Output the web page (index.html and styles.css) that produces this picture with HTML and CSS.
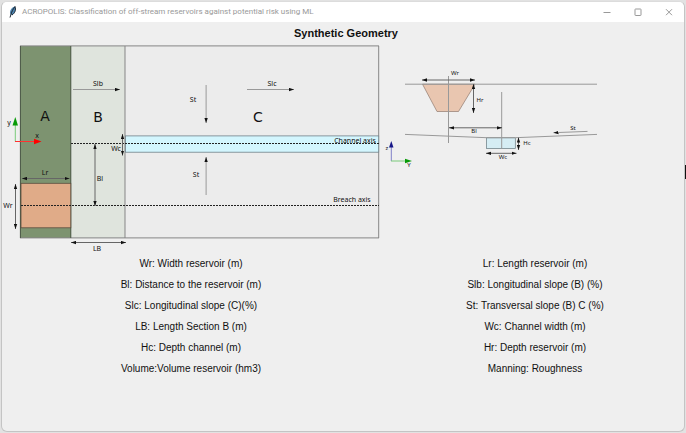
FILE: index.html
```html
<!DOCTYPE html>
<html lang="en">
<head>
<meta charset="utf-8">
<title>ACROPOLIS</title>
<link rel="stylesheet" href="styles.css">
</head>
<body>
<main class="window">
  <header class="titlebar">
    <svg class="app-icon" viewBox="0 0 10 12" aria-hidden="true">
      <path d="M7 0.500C4 1.200 2 3.500 2 6.500L2.500 8.500L4 9C7 7 8.200 4 7 0.500Z" fill="#4c82ad"/>
      <path d="M7 0.500C5 3 3.500 6 2.800 9L2 11.500M7 0.500C8.200 4 7 7 4 9" fill="none" stroke="#1c2530" stroke-width="1"/>
    </svg>
    <span class="app-name">ACROPOLIS: Classification of off-stream reservoirs against potential risk using ML</span>
    <div class="controls">
      <button type="button" aria-label="Minimize"><svg viewBox="0 0 8 8"><path d="M0.500 4.500H7.500"/></svg></button>
      <button type="button" aria-label="Maximize"><svg viewBox="0 0 8 8"><rect x="1" y="1" width="6" height="6.500" rx="0.500"/></svg></button>
      <button type="button" aria-label="Close"><svg viewBox="0 0 8 8"><path d="M1 1.200L7 7.200M7 1.200L1 7.200"/></svg></button>
    </div>
  </header>

  <h1 class="heading">Synthetic Geometry</h1>

  <section class="columns">
    <svg class="figure" viewBox="2 43 378 209" role="img" aria-label="Plan view">
      <defs>
        <marker id="tip" viewBox="0 0 6 4" refX="6" refY="2" markerWidth="5" markerHeight="4" markerUnits="userSpaceOnUse" orient="auto-start-reverse"><path d="M0 0L6 2L0 4Z" fill="#111"/></marker>
      </defs>
      <rect x="125" y="46" width="254" height="192" fill="#ececec"/>
      <rect x="71" y="46" width="54" height="192" fill="#dfe4dd"/>
      <rect x="20" y="46" width="51" height="192" fill="#7d9370"/>
      <g class="edge">
        <path d="M20 45.900H379M20 237.900H379M378.700 46V238M125 46V238"/>
        <path d="M20.400 46V238M70.800 46V238" stroke="#4c5747"/>
      </g>
      <rect x="125.400" y="135.900" width="253.300" height="16.300" fill="#d3f6fe" stroke="#708087" stroke-width="0.800"/>
      <rect x="21" y="183.300" width="49.800" height="44.500" fill="#e0ab88" stroke="#5b4e3f" stroke-width="0.800"/>
      <path class="axis" d="M71 143.500H379M21 205.500H379"/>
      <g class="arrow">
        <path d="M73 89.500H120" marker-end="url(#tip)"/>
        <path d="M247 89.500H294" marker-end="url(#tip)"/>
        <path d="M206.100 85V123" marker-end="url(#tip)"/>
        <path d="M206.100 195V157" marker-end="url(#tip)"/>
      </g>
      <g class="arrow dark">
        <path d="M22 178.500H69.500" marker-start="url(#tip)" marker-end="url(#tip)"/>
        <path d="M71 242.500H126" marker-start="url(#tip)" marker-end="url(#tip)"/>
        <path d="M15.500 184V229" marker-start="url(#tip)" marker-end="url(#tip)"/>
        <path d="M95 144V206" marker-start="url(#tip)" marker-end="url(#tip)"/>
        <path d="M122.500 134V155.500" marker-start="url(#tip)" marker-end="url(#tip)"/>
      </g>
      <path d="M15.300 141.500V123" stroke="#7acb7a"/>
      <path d="M12.500 125.500L15.300 117L18 125.500Z" fill="#079a07"/>
      <path d="M15 141.500H36" stroke="#ff3030"/>
      <path d="M34 138.800L41.500 141.500L34 144.200Z" fill="#f00"/>
      <g class="label">
        <text x="98" y="86">Slb</text>
        <text x="272" y="86">Slc</text>
        <text x="193" y="102">St</text>
        <text x="196" y="177">St</text>
        <text x="45" y="175">Lr</text>
        <text x="8" y="208">Wr</text>
        <text x="100" y="181">Bl</text>
        <text x="116" y="151">Wc</text>
        <text x="97" y="251">LB</text>
        <text x="355" y="143">Channel axis</text>
        <text x="352" y="202">Breach axis</text>
        <text x="9" y="125">y</text>
        <text x="37" y="138">x</text>
      </g>
      <g class="zone">
        <text x="45" y="121">A</text>
        <text x="98" y="122">B</text>
        <text x="258" y="122">C</text>
      </g>
    </svg>

    <svg class="figure" viewBox="386 43 298 209" role="img" aria-label="Cross section">
      <path d="M422.500 84.200H475L458.500 111.500H437Z" fill="#e9c6b0" stroke="#907a6e" stroke-width="0.700"/>
      <rect x="486.500" y="137.800" width="28.800" height="10.800" fill="#d5edf4" stroke="#66787f" stroke-width="0.700"/>
      <g class="arrow">
        <path d="M405 84.200H597M448.500 76V143M501.700 92V149"/>
        <path d="M405 134.400L486.500 137.700H515.500L597 134.400"/>
        <path d="M587.500 131.400L553.500 132.700" marker-end="url(#tip)"/>
      </g>
      <g class="arrow dark">
        <path d="M422 80H475" marker-start="url(#tip)" marker-end="url(#tip)"/>
        <path d="M473.500 84V113" marker-start="url(#tip)" marker-end="url(#tip)"/>
        <path d="M449 127.800H502" marker-start="url(#tip)" marker-end="url(#tip)"/>
        <path d="M486 153.300H516.500" marker-start="url(#tip)" marker-end="url(#tip)"/>
        <path d="M518.500 137.500V150" marker-start="url(#tip)" marker-end="url(#tip)"/>
      </g>
      <path d="M391.300 161V146" stroke="#8080c8"/>
      <path d="M389 147.500L391.300 141L393.500 147.500Z" fill="#171788"/>
      <path d="M391 161H406" stroke="#7acb7a"/>
      <path d="M405 158.800L412 161L405 163.200Z" fill="#079a07"/>
      <g class="label small">
        <text x="455" y="75">Wr</text>
        <text x="480" y="102">Hr</text>
        <text x="474" y="133">Bl</text>
        <text x="573" y="130">St</text>
        <text x="527" y="145">Hc</text>
        <text x="503" y="159">Wc</text>
        <text x="387" y="150">z</text>
        <text x="409" y="167">Y</text>
      </g>
    </svg>
  </section>

  <section class="columns">
    <ul class="legend">
      <li>Wr: Width reservoir (m)</li>
      <li>Bl: Distance to the reservoir (m)</li>
      <li>Slc: Longitudinal slope (C)(%)</li>
      <li>LB: Length Section B (m)</li>
      <li>Hc: Depth channel (m)</li>
      <li>Volume:Volume reservoir (hm3)</li>
    </ul>
    <ul class="legend">
      <li>Lr: Length reservoir (m)</li>
      <li>Slb: Longitudinal slope (B) (%)</li>
      <li>St: Transversal slope (B) C (%)</li>
      <li>Wc: Channel width (m)</li>
      <li>Hr: Depth reservoir (m)</li>
      <li>Manning: Roughness</li>
    </ul>
  </section>
</main>
</body>
</html>
```
FILE: styles.css
```css
* {
  box-sizing: border-box;
}

body {
  margin: 0;
  min-height: 100vh;
  display: flex;
  padding: 1px;
  background: #e2e2e2;
  font-family: "Liberation Sans", Arial, sans-serif;
  color: #111;
}

/* Edge of a control in the window behind */
body::after {
  content: "";
  position: absolute;
  top: 165px;
  right: 0;
  width: 1px;
  height: 14px;
  background: #111;
}

.window {
  flex: 1;
  border: 1px solid #c4c4c4;
  border-top-color: #dcdcdc;
  border-radius: 6px;
  background: #efefef;
  overflow: hidden;
}

.titlebar {
  display: flex;
  align-items: center;
  height: 20px;
  padding-left: 6px;
  background: #fff;
}

.app-icon {
  width: 10px;
  height: 12px;
  margin-right: 4px;
}

.app-name {
  flex: 1;
  font-family: Roboto, sans-serif;
  font-size: 8px;
  line-height: 20px;
  color: #999;
  white-space: nowrap;
}

.controls {
  display: flex;
}

.controls button {
  display: flex;
  align-items: center;
  justify-content: center;
  width: 31px;
  height: 20px;
  padding: 0;
  border: 0;
  background: none;
}

.controls svg {
  width: 8px;
  height: 8px;
  fill: none;
  stroke: #999;
}

.heading {
  margin: 0;
  padding: 2px 0 0 6px;
  font-size: 11px;
  line-height: 19px;
  text-align: center;
}

.columns {
  display: grid;
  grid-template-columns: 378fr 298fr;
  column-gap: 6px;
}

.figure {
  display: block;
  width: 100%;
  overflow: visible;
}

.edge {
  fill: none;
  stroke: #858585;
}

.axis {
  stroke: #222;
  stroke-dasharray: 2 1;
}

.arrow {
  fill: none;
  stroke: #999;
  stroke-width: 1px;
}

.dark {
  stroke: #666;
}

.label {
  font-family: "Noto Sans", sans-serif;
  font-size: 7px;
  text-anchor: middle;
  fill: #111;
}

.small {
  font-size: 6px;
}

.zone {
  font-family: "DejaVu Sans", sans-serif;
  font-size: 14px;
  text-anchor: middle;
  fill: #111;
}

.legend {
  margin: 0;
  padding: 1px 0 0;
  list-style: none;
  font-size: 10px;
  line-height: 21px;
  text-align: center;
}
```
